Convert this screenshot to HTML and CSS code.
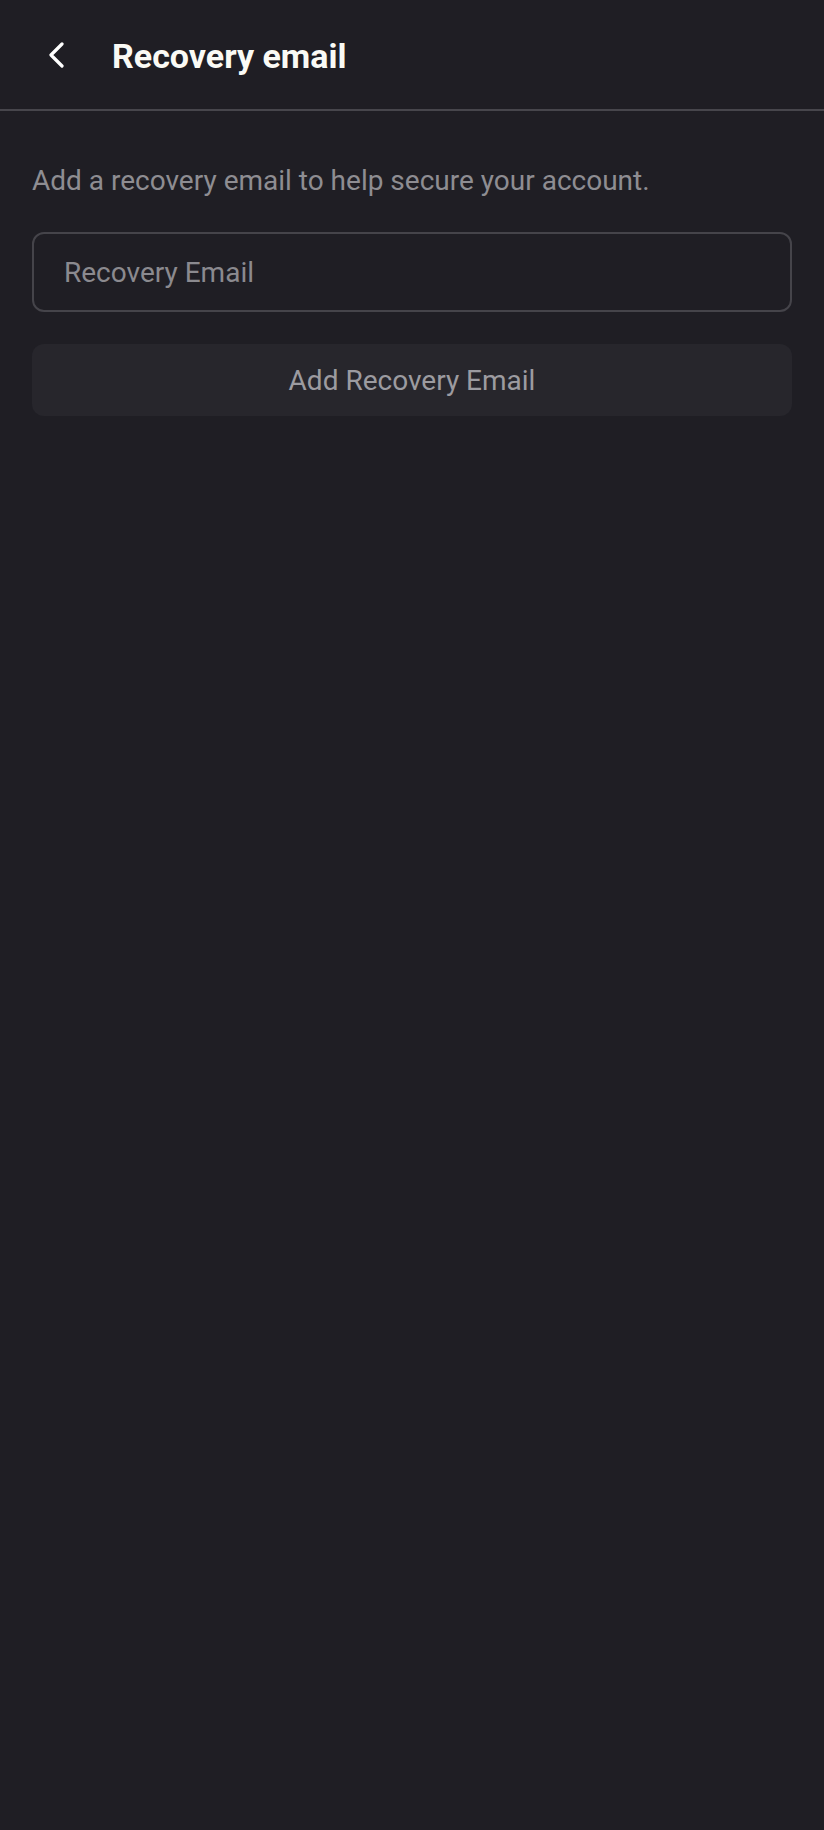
FILE: index.html
```html
<!DOCTYPE html>
<html lang="en">
<head>
<meta charset="utf-8">
<title>Recovery email</title>
<link rel="stylesheet" href="styles.css">
</head>
<body>
<div class="screen">
  <header class="topbar">
    <button class="back" aria-label="Back">
      <svg width="16" height="26" viewBox="0 0 16 26"><polyline points="14,2 3,13 14,24" fill="none" stroke="#ffffff" stroke-width="3.2" stroke-linecap="round" stroke-linejoin="round"/></svg>
    </button>
    <h1 class="title">Recovery email</h1>
  </header>
  <main class="content">
    <p class="hint">Add a recovery email to help secure your account.</p>
    <input class="field" type="email" placeholder="Recovery Email">
    <button class="primary">Add Recovery Email</button>
  </main>
</div>
</body>
</html>
```
FILE: styles.css
```css
html, body {
  margin: 0;
  padding: 0;
  background: #1f1e24;
}
body {
  font-family: Roboto, "Noto Sans", "Liberation Sans", sans-serif;
  width: 824px;
  min-height: 1830px;
}
.screen {
  min-height: 1830px;
  background: #1f1e24;
}
.topbar {
  height: 111px;
  box-sizing: border-box;
  padding: 2px 0 0 48px;
  display: flex;
  align-items: center;
  gap: 48px;
  border-bottom: 2px solid #47464c;
}
.back {
  background: none;
  border: 0;
  padding: 0;
  width: 16px;
  height: 26px;
  display: flex;
  margin-top: -2px;
}
.title {
  margin: 0;
  color: #fafaf5;
  font-size: 34px;
  font-weight: 700;
  line-height: 40px;
  letter-spacing: 0;
}
.content {
  padding: 53px 32px 0;
  display: flex;
  flex-direction: column;
}
.hint {
  margin: 0;
  color: #8e8d92;
  font-size: 28px;
  line-height: 33px;
}
.field {
  margin-top: 35px;
  height: 80px;
  box-sizing: border-box;
  border: 2px solid #45444a;
  border-radius: 12px;
  background: transparent;
  padding: 0 30px;
  font-family: inherit;
  font-size: 28px;
  color: #ffffff;
  outline: none;
}
.field::placeholder {
  color: #8b8a8f;
}
.primary {
  margin-top: 32px;
  height: 72px;
  border: 0;
  border-radius: 12px;
  background: #27262c;
  color: #9c9ba0;
  font-family: inherit;
  font-size: 28px;
  padding: 0;
}
```
